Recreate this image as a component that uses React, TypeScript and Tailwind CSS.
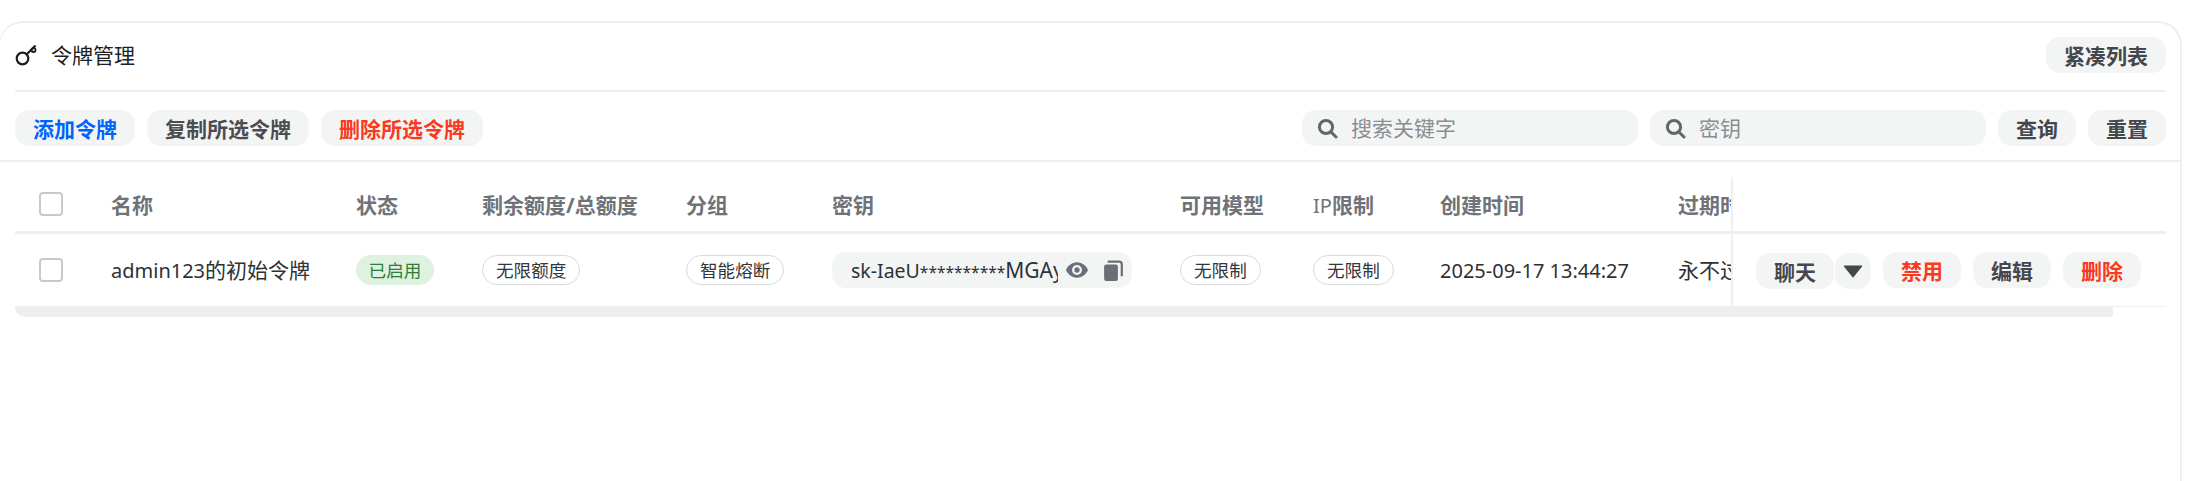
import type { ReactNode } from "react";

const font = "[font-family:'Noto_Sans','Noto_Sans_CJK_SC',sans-serif]";

function KeyIcon() {
  return (
    <svg width="24" height="24" viewBox="0 0 24 24" fill="none" stroke="#1c1f23" strokeWidth="2.200" className="shrink-0">
      <circle cx="7.500" cy="15.500" r="5.800" />
      <path d="M11.500 11.500 L20.500 2.500" />
      <circle cx="18.500" cy="7" r="2" strokeWidth="1.800" />
    </svg>
  );
}

function SearchIcon() {
  return (
    <svg width="21" height="21" viewBox="0 0 21 21" fill="none" stroke="#63676c" strokeWidth="3" className="shrink-0">
      <circle cx="9" cy="9" r="6.600" />
      <path d="M14 14 L19 19" strokeLinecap="round" />
    </svg>
  );
}

function EyeIcon() {
  return (
    <svg width="22" height="16" viewBox="0 0 20 14" className="shrink-0">
      <path fillRule="evenodd" fill="#6b6f75" d="M10 0C5 0 1.500 3.500 0 7c1.500 3.500 5 7 10 7s8.500-3.500 10-7c-1.500-3.500-5-7-10-7zm0 11.500a4.500 4.500 0 1 1 0-9 4.500 4.500 0 0 1 0 9zM10 4.600a2.400 2.400 0 1 0 0 4.800 2.400 2.400 0 0 0 0-4.800z" />
    </svg>
  );
}

function CopyIcon() {
  return (
    <svg width="19" height="21" viewBox="0 0 17 19" className="shrink-0">
      <rect x="0" y="4" width="12.500" height="15" rx="2" fill="#6b6f75" />
      <path d="M4 1.500h9.500a2.500 2.500 0 0 1 2.500 2.500v10" fill="none" stroke="#6b6f75" strokeWidth="2" strokeLinecap="round" />
    </svg>
  );
}

function Btn({ color, children, className }: { color: string; children: ReactNode; className?: string }) {
  return (
    <button className={`h-[36px] pt-[2px] rounded-[14px] bg-[#f3f5f5] text-[21px] font-bold leading-none whitespace-nowrap shrink-0 ${color} ${className ?? ""}`}>
      {children}
    </button>
  );
}

function Tag({ children }: { children: ReactNode }) {
  return (
    <span className="inline-flex items-center h-[30px] px-[13px] rounded-full border border-[#d9dadb] text-[17.6px] text-[#33363a] whitespace-nowrap">
      {children}
    </span>
  );
}

function SearchBox({ placeholder }: { placeholder: string }) {
  return (
    <div className="flex items-center h-[36px] w-[336px] pl-[15px] gap-[13px] rounded-[14px] bg-[#f3f5f5] text-[21px] text-[#8a8d91] shrink-0">
      <SearchIcon />
      <span className="pt-[2px]">{placeholder}</span>
    </div>
  );
}

function Checkbox() {
  return <div className="w-[24px] h-[24px] rounded-[4px] border-2 border-[#c6cacd] bg-white ml-[24px]" />;
}

const cols = "grid grid-cols-[96px_245px_126px_204px_146px_348px_133px_127px_238px_53px_1fr] items-center";

export default function App() {
  return (
    <div className={`h-[481px] bg-white pt-[21px] overflow-hidden ${font}`}>
      <div className="w-[2183px] h-[460px] rounded-t-[24px] border-t-2 border-r-2 border-l border-[#eeeff0] -ml-px">
        {/* title */}
        <div className="ml-[15px] mr-[14px] h-[69px] flex items-center justify-between border-b-2 border-[#eeeff0] pb-[3px]">
          <div className="flex items-center gap-[12px] text-[21px] text-[#1c1f23]">
            <KeyIcon />
            <span className="pt-[2px]">令牌管理</span>
          </div>
          <Btn color="text-[#44474c]" className="w-[120px]">紧凑列表</Btn>
        </div>

        {/* toolbar */}
        <div className="h-[70px] pl-[15px] border-b-2 border-[#eeeff0]">
          <div className="mr-[14px] h-full flex items-start pt-[18px] gap-[12px]">
            <Btn color="text-[#0064fa]" className="w-[120px]">添加令牌</Btn>
            <Btn color="text-[#4a4d52]" className="w-[162px]">复制所选令牌</Btn>
            <Btn color="text-[#f93920]" className="w-[162px]">删除所选令牌</Btn>
            <div className="flex-1" />
            <SearchBox placeholder="搜索关键字" />
            <SearchBox placeholder="密钥" />
            <Btn color="text-[#44474c]" className="w-[78px]">查询</Btn>
            <Btn color="text-[#44474c]" className="w-[78px]">重置</Btn>
          </div>
        </div>

        {/* table */}
        <div className="ml-[15px] w-[2151px] mt-[15px] text-[21px]">
          <div className={`${cols} h-[57px] border-b-[3px] border-[#eeeff0] text-[#6f7378] font-bold [&>span]:pt-[3px]`}>
            <Checkbox />
            <span>名称</span>
            <span>状态</span>
            <span className="whitespace-nowrap">剩余额度/总额度</span>
            <span>分组</span>
            <span>密钥</span>
            <span>可用模型</span>
            <span className="whitespace-nowrap"><span className="font-normal text-[20px]">IP</span>限制</span>
            <span>创建时间</span>
            <span className="overflow-hidden whitespace-nowrap">过期时间</span>
            <div className="h-full border-l-2 border-[#eeeff0]" />
          </div>
          <div className={`${cols} h-[73px] text-[#2e3135] border-b border-[#eeeff0]`}>
            <Checkbox />
            <span className="whitespace-nowrap pt-[2px]"><span className="text-[20px]">admin123</span>的初始令牌</span>
            <span>
              <span className="inline-flex items-center h-[30px] w-[78px] justify-center rounded-full bg-[#dff1e0] text-[17.6px] text-[#2f7d38]">已启用</span>
            </span>
            <span><Tag>无限额度</Tag></span>
            <span><Tag>智能熔断</Tag></span>
            <div className="w-[300px] h-[36px] rounded-[14px] bg-[#f3f5f5] flex items-center pl-[19px]">
              <span className="w-[207px] pt-[2px] overflow-hidden whitespace-nowrap text-[19.5px]">sk-IaeU<span className="text-[15.5px]">**********</span><span className="text-[21px]">MGAy1</span></span>
              <span className="ml-[8px]"><EyeIcon /></span>
              <span className="ml-[16px]"><CopyIcon /></span>
            </div>
            <span><Tag>无限制</Tag></span>
            <span><Tag>无限制</Tag></span>
            <span className="whitespace-nowrap text-[20px] pt-[2px]">2025-09-17 13:44:27</span>
            <span className="overflow-hidden whitespace-nowrap pt-[2px]">永不过期</span>
            <div className="h-full border-l-2 border-[#eeeff0] flex items-center pl-[23px]">
              <Btn color="text-[#44474c]" className="w-[78px] mt-[2px]">聊天</Btn>
              <button className="w-[36px] h-[36px] ml-[1px] mt-[2px] rounded-[14px] bg-[#f3f5f5] flex items-center justify-center shrink-0">
                <svg width="20" height="13" viewBox="0 0 18 12"><path d="M1 1h16L9 11z" fill="#44474c" stroke="#44474c" strokeLinejoin="round" /></svg>
              </button>
              <Btn color="text-[#f93920]" className="w-[78px] ml-[12px]">禁用</Btn>
              <Btn color="text-[#44474c]" className="w-[78px] ml-[12px]">编辑</Btn>
              <Btn color="text-[#f93920]" className="w-[78px] ml-[12px]">删除</Btn>
            </div>
          </div>
          <div className="w-[2098px] h-[10px] bg-[#edeef0] rounded-bl-[12px] rounded-br-[4px]" />
        </div>
      </div>
    </div>
  );
}
